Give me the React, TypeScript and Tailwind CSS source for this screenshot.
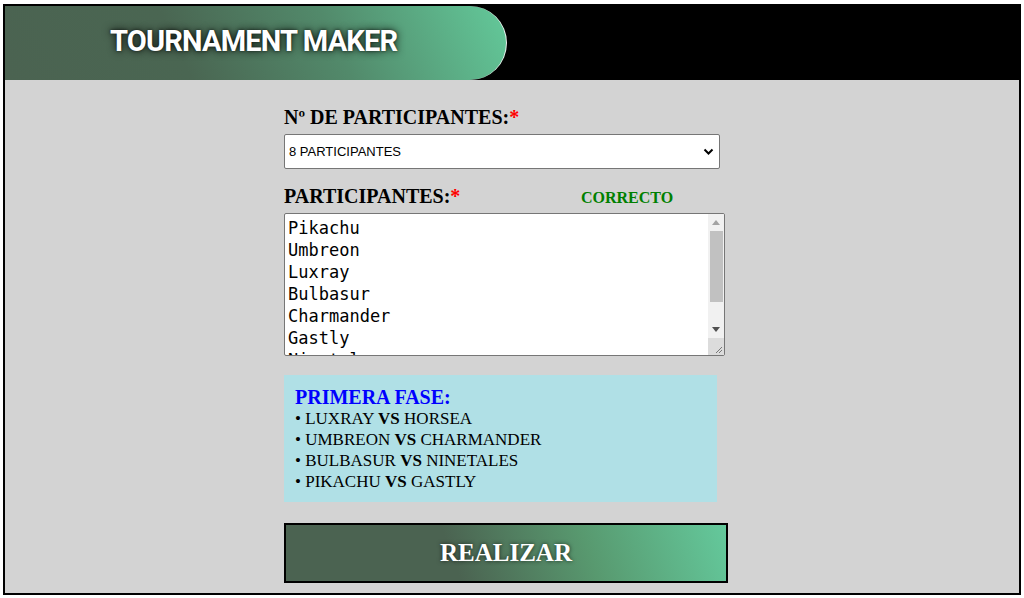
import React from "react";

export default function App() {
  const serif = { fontFamily: '"Liberation Serif", "Times New Roman", serif' };
  const matches: [string, string][] = [
    ["LUXRAY", "HORSEA"],
    ["UMBREON", "CHARMANDER"],
    ["BULBASUR", "NINETALES"],
    ["PIKACHU", "GASTLY"],
  ];
  const names = "Pikachu\nUmbreon\nLuxray\nBulbasur\nCharmander\nGastly\nNinetales\nHorsea";
  return (
    <div className="w-[1024px] h-[598px] bg-white pt-[4px] pl-[3px]">
      <div className="w-[1018px] h-[591px] border-2 border-black bg-[#d3d3d3] flex flex-col overflow-hidden">
        <header className="h-[74px] bg-black flex shrink-0">
          <div className="w-[502px] h-full rounded-r-[37px] border-r border-white/90 bg-[linear-gradient(65deg,#4b6351_0%,#4a6652_35%,#528a6b_65%,#63c99a_100%)] flex items-center pl-[105px]">
            <h1
              className="text-white text-[29px] font-bold tracking-[-0.8px] leading-none -mt-[3px] [text-shadow:0_0_8px_rgba(0,0,0,0.9),0_0_3px_rgba(0,0,0,0.6)]"
              style={{ fontFamily: 'Roboto, "Noto Sans", sans-serif' }}
            >
              TOURNAMENT MAKER
            </h1>
          </div>
        </header>
        <main className="pl-[279px] pt-[26px] flex flex-col w-[730px]" style={serif}>
          <label className="text-[20px] font-bold leading-[22px] text-black">
            Nº DE PARTICIPANTES:<span className="text-[#ff0000]">*</span>
          </label>
          <div className="mt-[6px] w-[436px] h-[35px] bg-white border border-[#767676] rounded-[2px] flex items-center justify-between pl-[4px] pr-[5px]">
            <span className="text-[13px] text-black" style={{ fontFamily: '"Liberation Sans", Arial, sans-serif' }}>
              8 PARTICIPANTES
            </span>
            <svg width="11" height="8" viewBox="0 0 11 8">
              <path d="M1.5 1.5 L5.5 5.5 L9.5 1.5" stroke="#000" strokeWidth="2" fill="none" />
            </svg>
          </div>
          <div className="mt-[16px] flex items-baseline">
            <label className="text-[20px] font-bold leading-[22px] text-black w-[297px]">
              PARTICIPANTES:<span className="text-[#ff0000]">*</span>
            </label>
            <span className="text-[16px] font-bold text-[#008000]">CORRECTO</span>
          </div>
          <div className="mt-[3px] w-[441px] h-[143px] bg-white border border-[#767676] rounded-[2px] flex overflow-hidden">
            <pre
              className="flex-1 pl-[3px] pt-[3px] text-[17px] leading-[22px] text-black overflow-hidden m-0"
              style={{ fontFamily: '"DejaVu Sans Mono", monospace' }}
            >
              {names}
            </pre>
            <div className="w-[16px] h-full bg-[#f1f1f1] flex flex-col items-center">
              <div className="h-[17px] flex items-center justify-center">
                <svg width="8" height="5" viewBox="0 0 8 5"><path d="M0 5 L4 0 L8 5 Z" fill="#a3a3a3" /></svg>
              </div>
              <div className="w-[13px] h-[71px] bg-[#c1c1c1]" />
              <div className="flex-1" />
              <div className="h-[17px] flex items-center justify-center">
                <svg width="8" height="5" viewBox="0 0 8 5"><path d="M0 0 L8 0 L4 5 Z" fill="#505050" /></svg>
              </div>
              <div className="w-full h-[17px] bg-[#dcdcdc] flex items-end justify-end pr-[1px] pb-[1px]">
                <svg width="8" height="8" viewBox="0 0 8 8">
                  <path d="M7 1 L1 7 M7 4 L4 7" stroke="#777" strokeWidth="1" />
                </svg>
              </div>
            </div>
          </div>
          <div className="mt-[19px] w-[433px] h-[127px] bg-[#b0e0e6] pl-[11px] pt-[11px]">
            <div className="text-[20px] font-bold text-[#0000ff] leading-[22px]">PRIMERA FASE:</div>
            {matches.map(([a, b]) => (
              <div key={a} className="text-[17px] leading-[21px] text-black">
                • {a} <b>VS</b> {b}
              </div>
            ))}
          </div>
          <button className="mt-[21px] w-[444px] h-[60px] border-2 border-black bg-[linear-gradient(70deg,#4b6351_0%,#4b6351_38%,#58996f_68%,#64c99c_100%)] flex items-center justify-center">
            <span className="text-white text-[25px] font-bold [text-shadow:0_0_4px_rgba(0,0,0,0.7)]" style={serif}>
              REALIZAR
            </span>
          </button>
        </main>
      </div>
    </div>
  );
}
